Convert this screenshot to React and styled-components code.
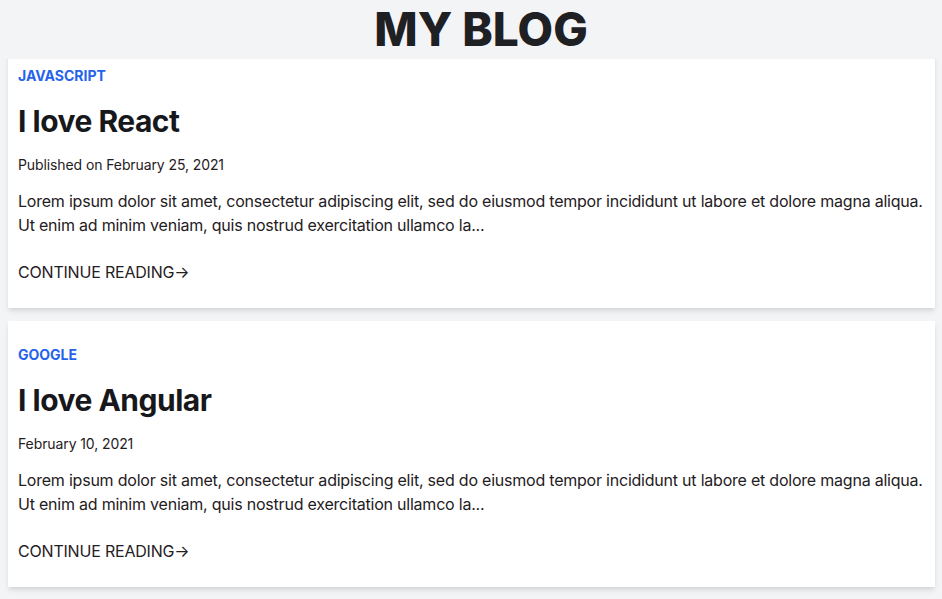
import React from "react";
import styled, { createGlobalStyle } from "styled-components";

const posts = [
  {
    id: 1,
    category: "JAVASCRIPT",
    title: "I love React",
    date: "Published on February 25, 2021",
    excerpt:
      "Lorem ipsum dolor sit amet, consectetur adipiscing elit, sed do eiusmod tempor incididunt ut labore et dolore magna aliqua. Ut enim ad minim veniam, quis nostrud exercitation ullamco la...",
  },
  {
    id: 2,
    category: "GOOGLE",
    title: "I love Angular",
    date: "February 10, 2021",
    excerpt:
      "Lorem ipsum dolor sit amet, consectetur adipiscing elit, sed do eiusmod tempor incididunt ut labore et dolore magna aliqua. Ut enim ad minim veniam, quis nostrud exercitation ullamco la...",
  },
];

const App = () => {
  return (
    <>
      <GlobalStyle />
      <Header>
        <Title>MY BLOG</Title>
      </Header>
      <PostList>
        {posts.map((post) => (
          <Card key={post.id}>
            <Category>{post.category}</Category>
            <PostTitle>{post.title}</PostTitle>
            <PostDate>{post.date}</PostDate>
            <Excerpt>{post.excerpt}</Excerpt>
            <ReadMore href="#">CONTINUE READING→</ReadMore>
          </Card>
        ))}
      </PostList>
    </>
  );
};

export default App;

const GlobalStyle = createGlobalStyle`
  * {
    box-sizing: border-box;
  }
  body {
    margin: 0;
    background: #f3f4f6;
    font-family: Inter, "Liberation Sans", sans-serif;
    color: #111827;
  }
`;

// fixed bar, it covers the top of the first card
const Header = styled.header`
  position: fixed;
  top: 0;
  left: 0;
  right: 0;
  height: 59px;
  display: flex;
  justify-content: center;
  padding-left: 20px;
  background: #f3f4f6;
  z-index: 10;
`;

const Title = styled.h1`
  margin: 6px 0 0;
  font-size: 46px;
  line-height: 46px;
  font-weight: 800;
  color: #1f2023;
`;

const PostList = styled.main`
  display: flex;
  flex-direction: column;
  gap: 13px;
  padding: 42px 7px 11px 8px;
`;

const Card = styled.article`
  display: flex;
  flex-direction: column;
  align-items: flex-start;
  padding: 24px 10px 24px;
  background: #ffffff;
  box-shadow: 0 4px 6px -1px rgba(0, 0, 0, 0.1), 0 2px 4px -1px rgba(0, 0, 0, 0.06);
`;

const Category = styled.span`
  font-size: 14px;
  line-height: 20px;
  font-weight: 700;
  color: #2563eb;
`;

const PostTitle = styled.h2`
  margin: 17px 0 0;
  font-size: 30px;
  line-height: 36px;
  font-weight: 700;
  letter-spacing: -0.5px;
  color: #17181b;
`;

const PostDate = styled.p`
  margin: 16px 0 0;
  font-size: 14px;
  line-height: 20px;
  letter-spacing: -0.1px;
  color: #1f2023;
`;

const Excerpt = styled.p`
  margin: 14px 0 0;
  font-size: 16px;
  line-height: 24px;
  letter-spacing: -0.22px;
  color: #1f2023;
`;

const ReadMore = styled.a`
  margin-top: 23px;
  font-size: 16px;
  line-height: 24px;
  letter-spacing: -0.2px;
  color: #1f2023;
  text-decoration: none;
`;
